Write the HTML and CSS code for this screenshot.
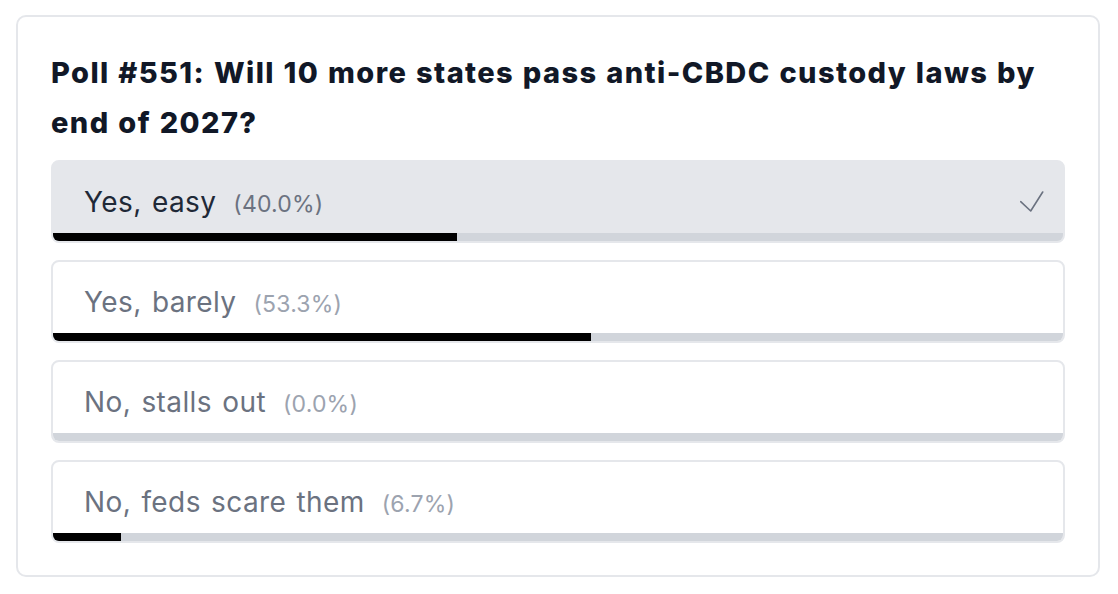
FILE: index.html
```html
<!DOCTYPE html>
<html lang="en">
<head>
<meta charset="utf-8">
<title>Poll #551</title>
<link rel="stylesheet" href="styles.css">
</head>
<body>
  <section class="poll">
    <h2 class="poll-title">Poll #551: Will 10 more states pass anti-CBDC custody laws by end of 2027?</h2>
    <ul class="options">
      <li class="option is-selected">
        <div class="option-row">
          <span class="option-label">Yes, easy<span class="option-pct">(40.0%)</span></span>
          <svg class="check" width="24" height="24" viewBox="0 0 24 24" fill="none" aria-hidden="true">
            <path d="M0.7 10.7 L10.7 20 L22.7 1" stroke="#6b7280" stroke-width="1.6" stroke-linecap="round" stroke-linejoin="round"/>
          </svg>
        </div>
        <div class="bar"><div class="bar-fill" style="width: 40%"></div></div>
      </li>
      <li class="option">
        <div class="option-row">
          <span class="option-label">Yes, barely<span class="option-pct">(53.3%)</span></span>
        </div>
        <div class="bar"><div class="bar-fill" style="width: 53.3%"></div></div>
      </li>
      <li class="option">
        <div class="option-row">
          <span class="option-label">No, stalls out<span class="option-pct">(0.0%)</span></span>
        </div>
        <div class="bar"><div class="bar-fill" style="width: 0%"></div></div>
      </li>
      <li class="option">
        <div class="option-row">
          <span class="option-label">No, feds scare them<span class="option-pct">(6.7%)</span></span>
        </div>
        <div class="bar"><div class="bar-fill" style="width: 6.7%"></div></div>
      </li>
    </ul>
  </section>
</body>
</html>
```

FILE: styles.css
```css
* {
  box-sizing: border-box;
}

html, body {
  margin: 0;
  padding: 0;
  background: #ffffff;
}

body {
  font-family: Inter, "Noto Sans", "Liberation Sans", sans-serif;
  color: #111827;
}

.poll {
  width: 1084px;
  height: 562px;
  margin: 15px 0 0 16px;
  padding: 31px 33px 0 33px;
  border: 2px solid #e5e7eb;
  border-radius: 10px;
}

.poll-title {
  margin: 0 0 12px;
  font-size: 29px;
  line-height: 50px;
  font-weight: 800;
  letter-spacing: 1.4px;
  word-spacing: 1px;
  color: #111827;
}

.options {
  list-style: none;
  margin: 0;
  padding: 0;
  display: flex;
  flex-direction: column;
  gap: 17px;
}

.option {
  height: 83px;
  border: 2px solid #e5e7eb;
  border-radius: 8px;
  overflow: hidden;
  background: #ffffff;
  display: flex;
  flex-direction: column;
}

.option.is-selected {
  background: #e5e7eb;
}

.option-row {
  flex: 1;
  display: flex;
  align-items: center;
  justify-content: space-between;
  padding: 11px 19px 0 31px;
}

.option-label {
  font-size: 28px;
  line-height: 42px;
  letter-spacing: 0.4px;
  word-spacing: 2px;
  color: #6b7280;
  white-space: nowrap;
}

.is-selected .option-label {
  color: #1f2937;
}

.option-pct {
  margin-left: 17px;
  font-size: 23px;
  letter-spacing: 0.2px;
  color: #9ca3af;
}

.is-selected .option-pct {
  color: #6b7280;
}

.check {
  display: block;
  flex: none;
}

.bar {
  height: 8px;
  background: #d1d5db;
  flex: none;
}

.bar-fill {
  height: 100%;
  background: #000000;
}
```
